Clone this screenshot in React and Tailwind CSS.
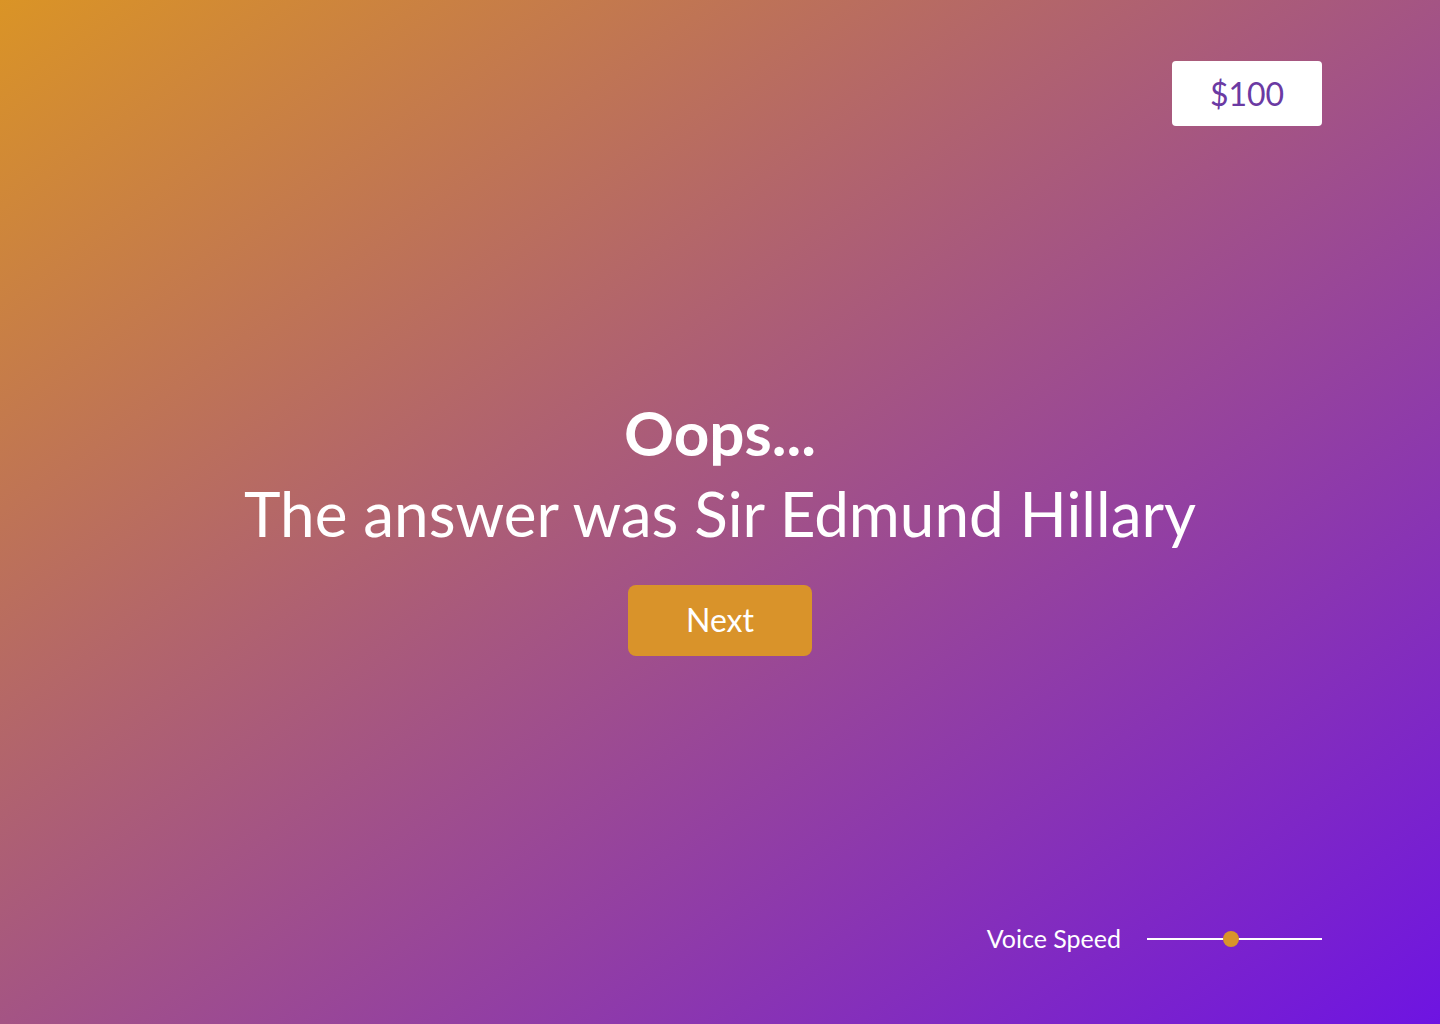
import { useState } from "react";

const font = { fontFamily: "Lato, 'Open Sans', sans-serif" };

const VoiceSpeed = () => {
  const [speed, setSpeed] = useState(48);

  return (
    <div className="flex items-center gap-[26px]">
      <span className="text-[25px] text-white">Voice Speed</span>
      <div className="relative w-[175px] h-[16px] flex items-center">
        <div className="w-full h-[2px] bg-white" />
        <div
          className="absolute top-0 w-[16px] h-[16px] rounded-full bg-[#d9932a] -translate-x-1/2"
          style={{ left: `${speed}%` }}
          onClick={() => setSpeed(speed)}
        />
      </div>
    </div>
  );
};

export default function App() {
  return (
    <div
      className="w-full h-[1024px] flex flex-col px-[118px] py-[61px] bg-[linear-gradient(to_bottom_right,#da9426,#6e14e2)]"
      style={font}
    >
      {/* Score */}
      <div className="flex justify-end">
        <div className="w-[150px] h-[65px] bg-white rounded-[4px] flex items-center justify-center text-[32px] text-[#6b3aa3]">
          $100
        </div>
      </div>

      {/* Result */}
      <div className="flex-1 flex flex-col items-center justify-center pt-[4px] text-white">
        <h1 className="text-[62px] font-bold leading-[84px]">Oops...</h1>
        <p className="text-[62px] leading-[79px]">The answer was Sir Edmund Hillary</p>
        <button className="mt-[32px] w-[184px] h-[71px] rounded-[8px] bg-[#d9932a] text-[32px] text-white">
          Next
        </button>
      </div>

      {/* Footer */}
      <div className="flex justify-end h-[48px] items-center">
        <VoiceSpeed />
      </div>
    </div>
  );
}
